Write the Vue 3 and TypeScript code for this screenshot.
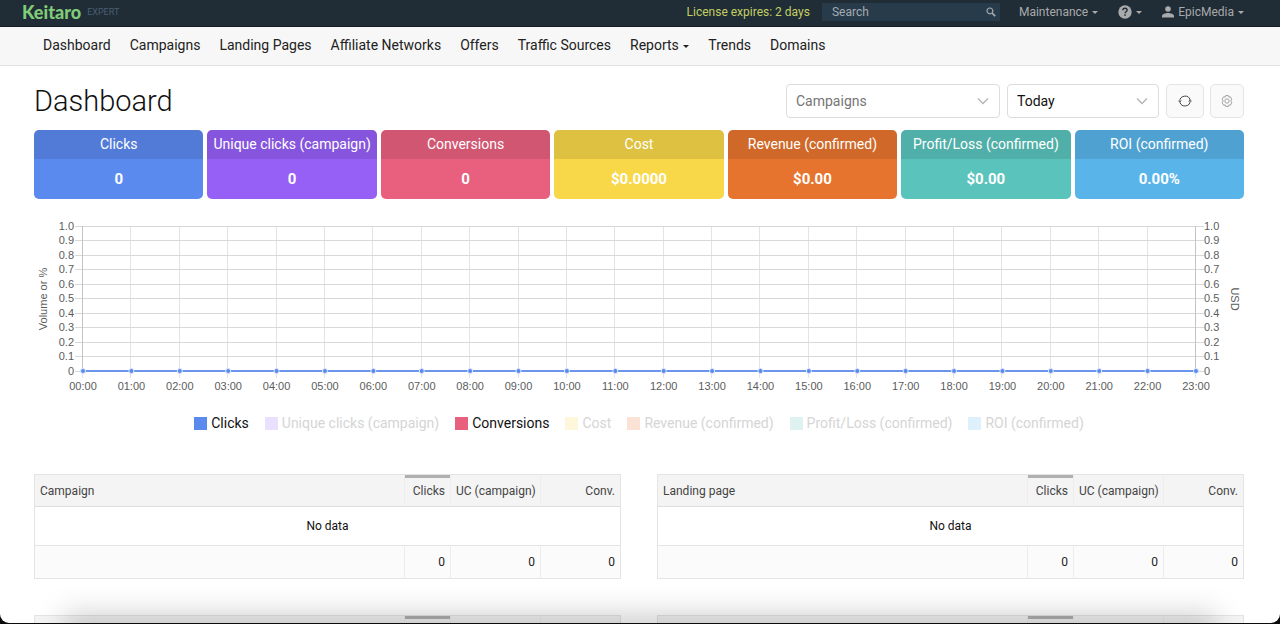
<script setup lang="ts">
import { ref } from 'vue'

interface Metric {
  label: string
  value: string
  color: string
  active: boolean
}

const navBefore: string[] = ['Dashboard', 'Campaigns', 'Landing Pages', 'Affiliate Networks', 'Offers', 'Traffic Sources']
const navAfter: string[] = ['Trends', 'Domains']

const metrics: Metric[] = [
  { label: 'Clicks', value: '0', color: '#5b8aef', active: true },
  { label: 'Unique clicks (campaign)', value: '0', color: '#965ff6', active: false },
  { label: 'Conversions', value: '0', color: '#e9607f', active: true },
  { label: 'Cost', value: '$0.0000', color: '#f8d749', active: false },
  { label: 'Revenue (confirmed)', value: '$0.00', color: '#e7742e', active: false },
  { label: 'Profit/Loss (confirmed)', value: '$0.00', color: '#5ac3bb', active: false },
  { label: 'ROI (confirmed)', value: '0.00%', color: '#59b4ea', active: false },
]

const search = ref('')
const group = ref('Campaigns')
const period = ref('Today')

const plot = { left: 49, right: 1162, top: 16, bottom: 161 }
const hours = Array.from({ length: 24 }, (_, i) => ({
  label: String(i).padStart(2, '0') + ':00',
  x: plot.left + ((plot.right - plot.left) * i) / 23,
}))
const levels = Array.from({ length: 11 }, (_, i) => ({
  label: i === 0 ? '0' : (i / 10).toFixed(1),
  y: Math.floor(plot.bottom - ((plot.bottom - plot.top) * i) / 10),
}))

const reports: string[] = ['Campaign', 'Landing page']
</script>

<template>
  <div class="window">
    <header class="topbar">
      <a class="logo" href="#">Keitaro</a>
      <span class="plan">EXPERT</span>
      <a class="license" href="#">License expires: 2 days</a>
      <label class="search">
        <input v-model="search" type="text" placeholder="Search" aria-label="Search" />
        <svg width="10" height="10" viewBox="0 0 10 10" fill="none" stroke="#a3abb1">
          <circle cx="3.9" cy="3.9" r="2.9" stroke-width="1.2" />
          <path d="M6.1 6.1 9.2 9.2" stroke-width="1.7" />
        </svg>
      </label>
      <button class="top-item maintenance" type="button">Maintenance <i class="caret"></i></button>
      <button class="top-item help" type="button" aria-label="Help">
        <svg width="14" height="14" viewBox="0 0 14 14">
          <circle cx="7" cy="7" r="6.7" fill="#a9aaab" />
          <path d="M4.9 5.3c0-1.3 1-2 2.1-2s2.1.7 2.1 1.9c0 1.5-2 1.6-2 3.1" fill="none" stroke="#202c36" stroke-width="1.4" />
          <rect x="6.3" y="9.3" width="1.5" height="1.5" fill="#202c36" />
        </svg>
        <i class="caret"></i>
      </button>
      <button class="top-item user" type="button">
        <svg width="12" height="12" viewBox="0 0 12 12" fill="#a9aaab">
          <circle cx="6" cy="3" r="2.8" />
          <path d="M0 11.5V10c0-2 3.5-3 6-3s6 1 6 3v1.5z" />
        </svg>
        EpicMedia <i class="caret"></i>
      </button>
    </header>

    <nav class="nav">
      <a v-for="item in navBefore" :key="item" href="#">{{ item }}</a>
      <a href="#">Reports <i class="caret"></i></a>
      <a v-for="item in navAfter" :key="item" href="#">{{ item }}</a>
    </nav>

    <main class="content">
      <div class="heading">
        <h1>Dashboard</h1>
        <div class="select group">
          <select v-model="group" aria-label="Group by">
            <option>Campaigns</option>
          </select>
          <svg width="12" height="8" viewBox="0 0 12 8"><path d="M1 1.5 6 6.5 11 1.5" /></svg>
        </div>
        <div class="select period">
          <select v-model="period" aria-label="Period">
            <option>Today</option>
          </select>
          <svg width="12" height="8" viewBox="0 0 12 8"><path d="M1 1.5 6 6.5 11 1.5" /></svg>
        </div>
        <button class="icon-button refresh" type="button" aria-label="Refresh">
          <svg width="14" height="14" viewBox="0 0 14 14" fill="none" stroke="#444">
            <path d="M1.8 7.6A5.3 5.3 0 0 1 12.2 6M12.2 6.8A5.3 5.3 0 0 1 1.9 8.4" />
            <path d="M.3 6.6 1.8 8.2 3.4 6.8M10.6 7.4 12.2 5.9 13.7 7.5" stroke-width=".8" />
          </svg>
        </button>
        <button class="icon-button" type="button" aria-label="Settings">
          <svg width="12" height="12" viewBox="0 0 12 12" fill="none" stroke="#999" stroke-width=".9">
            <path d="M4.6.6h2.8l.5 1.5 1.5-.3 1.4 2.4L9.8 6l1 1.8-1.4 2.4-1.5-.3-.5 1.5H4.6l-.5-1.5-1.5.3-1.4-2.4 1-1.8-1-1.8 1.4-2.4 1.5.3z" />
            <circle cx="6" cy="6" r="2.2" />
          </svg>
        </button>
      </div>

      <section class="cards">
        <article v-for="m in metrics" :key="m.label" class="card" :style="{ backgroundColor: m.color }">
          <h2>{{ m.label }}</h2>
          <strong>{{ m.value }}</strong>
        </article>
      </section>

      <svg class="chart" viewBox="0 0 1210 188" role="img" aria-label="Hourly volume">
        <g class="grid">
          <line v-for="h in hours" :key="h.label" :x1="Math.round(h.x) - 0.5" :x2="Math.round(h.x) - 0.5" :y1="plot.top" :y2="plot.bottom + 7" class="vertical" />
          <line v-for="l in levels" :key="l.label" :x1="plot.left - 8" :x2="plot.right + 8" :y1="l.y + 0.5" :y2="l.y + 0.5" />
          <path class="axis" :d="`M${plot.left - 0.5} ${plot.top}V${plot.bottom}M${plot.right - 0.5} ${plot.top}V${plot.bottom}`" />
        </g>
        <line class="series" :x1="plot.left" :x2="plot.right" :y1="plot.bottom" :y2="plot.bottom" />
        <circle v-for="h in hours" :key="h.label" class="dot" :cx="h.x" :cy="plot.bottom" r="2.5" />
        <g class="labels">
          <text v-for="h in hours" :key="h.label" :x="h.x" y="180" text-anchor="middle">{{ h.label }}</text>
          <text v-for="l in levels" :key="l.label" x="40" :y="l.y + 4" text-anchor="end">{{ l.label }}</text>
          <text v-for="l in levels" :key="l.label" x="1170" :y="l.y + 4">{{ l.label }}</text>
          <text transform="translate(13 89) rotate(-90)" text-anchor="middle">Volume or %</text>
          <text transform="translate(1197 89) rotate(90)" text-anchor="middle">USD</text>
        </g>
      </svg>

      <ul class="legend">
        <li v-for="m in metrics" :key="m.label" :class="{ off: !m.active }">
          <span class="swatch" :style="{ backgroundColor: m.color }"></span>
          <span class="name">{{ m.label }}</span>
        </li>
      </ul>

      <section class="reports">
        <table v-for="name in reports" :key="name">
          <colgroup>
            <col />
            <col class="c-clicks" />
            <col class="c-uc" />
            <col class="c-conv" />
          </colgroup>
          <thead>
            <tr>
              <th>{{ name }}</th>
              <th class="sorted">Clicks</th>
              <th>UC (campaign)</th>
              <th>Conv.</th>
            </tr>
          </thead>
          <tbody>
            <tr><td colspan="4">No data</td></tr>
          </tbody>
          <tfoot>
            <tr>
              <td></td>
              <td>0</td>
              <td>0</td>
              <td>0</td>
            </tr>
          </tfoot>
        </table>
        <table v-for="n in 2" :key="n">
          <colgroup>
            <col />
            <col class="c-clicks" />
            <col class="c-uc" />
            <col class="c-conv" />
          </colgroup>
          <thead>
            <tr>
              <th></th>
              <th class="sorted"></th>
              <th></th>
              <th></th>
            </tr>
          </thead>
        </table>
      </section>
    </main>
    <div class="shade"></div>
  </div>
</template>

<style>
body {
  margin: 0;
  background: #0b0b0b;
}
</style>

<style scoped>
* {
  box-sizing: border-box;
}
.window {
  position: relative;
  height: calc(100vh - 1px);
  overflow: hidden;
  background: #fff;
  border-radius: 0 0 9px 9px;
  font-family: Roboto, "Liberation Sans", sans-serif;
  font-size: 14px;
  color: #222;
}
a {
  color: inherit;
  text-decoration: none;
}
button,
input,
select {
  font: inherit;
  color: inherit;
  margin: 0;
}
.caret {
  display: inline-block;
  border: 3px solid transparent;
  border-top-color: currentColor;
  border-bottom: 0;
  vertical-align: middle;
}
.topbar {
  display: flex;
  align-items: center;
  height: 27px;
  padding: 0 36px 2px 22px;
  background: #202c36;
  border-bottom: 1px solid #141d24;
  font-size: 12px;
  color: #a9aaab;
}
.logo {
  font-family: Lato, Roboto, sans-serif;
  font-weight: 900;
  font-size: 18px;
  line-height: 24px;
  color: #80cc78;
}
.plan {
  margin-left: 6px;
  font-size: 9px;
  color: #4b5f73;
}
.license {
  margin-left: auto;
  color: #c3cf63;
}
.search {
  display: flex;
  align-items: center;
  width: 178px;
  height: 18px;
  margin-left: 12px;
  padding: 0 4px 0 10px;
  background: #283b4b;
}
.search input {
  flex: 1;
  min-width: 0;
  padding: 0;
  border: 0;
  outline: 0;
  background: transparent;
}
.search input::placeholder {
  color: #a3abb1;
  opacity: 1;
}
.top-item {
  display: flex;
  align-items: center;
  gap: 4px;
  padding: 0;
  border: 0;
  background: transparent;
}
.maintenance {
  margin-left: 19px;
}
.help {
  margin-left: 20px;
}
.user {
  margin-left: 20px;
}
.nav {
  display: flex;
  align-items: center;
  gap: 19px;
  height: 39px;
  padding: 0 43px 2px;
  background: #f7f7f7;
  border-bottom: 1px solid #e2e2e2;
}
.nav .caret {
  margin-left: 1px;
}
.content {
  padding: 18px 36px 0 34px;
}
.heading {
  display: flex;
  align-items: center;
  height: 34px;
}
h1 {
  flex: 1;
  margin: 0;
  font-size: 29px;
  line-height: 34px;
  font-weight: 300;
  color: #111;
}
.select {
  display: grid;
  align-items: center;
}
.select > * {
  grid-area: 1 / 1;
}
.select svg {
  justify-self: end;
  margin-right: 11px;
  fill: none;
  stroke: #b5b5b5;
  stroke-width: 1.4;
  pointer-events: none;
}
select {
  width: 100%;
  height: 34px;
  padding: 0 28px 0 9px;
  appearance: none;
  background: #fff;
  border: 1px solid #dcdcdc;
  border-radius: 4px;
}
.group {
  width: 214px;
  color: #757575;
}
.period {
  width: 152px;
  margin-left: 7px;
  color: #111;
}
.icon-button {
  display: grid;
  place-items: center;
  width: 34px;
  height: 34px;
  padding: 0;
  background: #fafafa;
  border: 1px solid #e4e4e4;
  border-radius: 5px;
}
.refresh {
  width: 38px;
  margin: 0 6px 0 7px;
}
.cards {
  display: grid;
  grid-template-columns: repeat(7, 1fr);
  gap: 4px;
  margin-top: 12px;
}
.card {
  overflow: hidden;
  border-radius: 5px;
  color: #fff;
  text-align: center;
  white-space: nowrap;
}
.card h2 {
  margin: 0;
  font-size: 14px;
  font-weight: 400;
  line-height: 29px;
  background: rgba(0, 0, 0, 0.1);
}
.card strong {
  display: block;
  font-size: 15px;
  font-weight: 700;
  line-height: 40px;
}
.chart {
  display: block;
  width: 100%;
  margin-top: 11px;
}
.grid line {
  stroke: #d8d8d8;
}
.grid .vertical {
  stroke: #e4e4e4;
}
.axis {
  stroke: #c4c4c4;
}
.series {
  stroke: #6b95ec;
  stroke-width: 2;
}
.dot {
  fill: #5b8aef;
  stroke: #dfe8fb;
  stroke-width: 1;
}
.labels text {
  font-family: "Liberation Sans", Arial, sans-serif;
  font-size: 11px;
  fill: #5c5c5c;
}
.legend {
  display: flex;
  justify-content: center;
  gap: 16px;
  margin: 15px 0 0;
  padding: 0;
  list-style: none;
  line-height: 20px;
  color: #111;
}
.legend li {
  display: flex;
  align-items: center;
  gap: 4px;
}
.swatch {
  width: 13px;
  height: 13px;
}
.off .swatch {
  opacity: 0.2;
}
.off .name {
  color: #d5d5d5;
}
.reports {
  display: grid;
  grid-template-columns: 1fr 1fr;
  gap: 36px;
  margin-top: 41px;
}
table {
  width: 100%;
  table-layout: fixed;
  border-spacing: 0;
  border: 1px solid #e4e4e4;
  font-size: 12px;
}
.c-clicks {
  width: 46px;
}
.c-uc {
  width: 90px;
}
.c-conv {
  width: 80px;
}
th,
td {
  padding: 0 5px;
  text-align: right;
  white-space: nowrap;
}
th {
  height: 32px;
  font-weight: 400;
  background: #f4f4f4;
  border-bottom: 1px solid #dedede;
  color: #444;
}
th:first-child {
  text-align: left;
}
th + th,
td + td {
  border-left: 1px solid #ededed;
}
.sorted {
  box-shadow: inset 0 3px #b0b0b0;
}
tbody td {
  height: 38px;
  text-align: center;
  color: #111;
}
tfoot td {
  height: 33px;
  background: #fbfbfb;
  border-top: 1px solid #e4e4e4;
}
.shade {
  position: absolute;
  inset: auto 64px -40px;
  height: 50px;
  background: rgba(0, 0, 0, 0.18);
  filter: blur(14px);
  pointer-events: none;
}
</style>
